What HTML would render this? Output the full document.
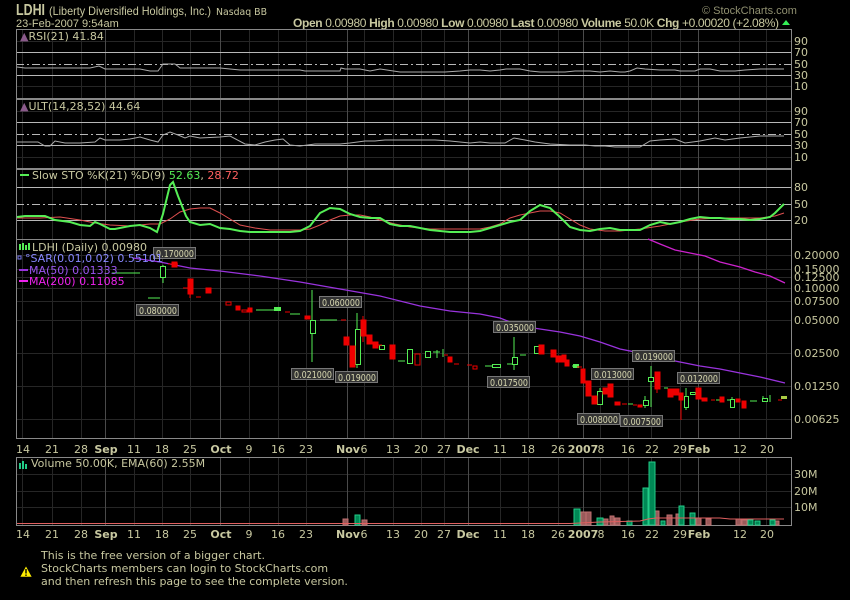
<!DOCTYPE html>
<html><head><meta charset="utf-8"><style>
html,body{margin:0;padding:0;background:#000;width:850px;height:600px;overflow:hidden}
svg{display:block;font-family:"DejaVu Sans","Liberation Sans",sans-serif}
</style></head><body>
<svg width="850" height="600" viewBox="0 0 850 600" xmlns="http://www.w3.org/2000/svg">
<rect width="850" height="600" fill="#000"/>
<!-- header -->
<text x="16" y="15" font-size="16" font-weight="bold" fill="#c8c8a0" font-family="Liberation Sans,sans-serif" textLength="29" lengthAdjust="spacingAndGlyphs">LDHI</text>
<text x="49" y="15" font-size="12" fill="#c8c8a0" font-family="Liberation Sans,sans-serif" textLength="162" lengthAdjust="spacingAndGlyphs">(Liberty Diversified Holdings, Inc.)</text>
<text x="216" y="15" font-size="10" fill="#c8c8a0" textLength="51" lengthAdjust="spacingAndGlyphs">Nasdaq BB</text>
<text x="16" y="27" font-size="11" fill="#c8c8a0" font-family="Liberation Sans,sans-serif">23-Feb-2007 9:54am</text>
<text x="293" y="27" font-size="12" fill="#c8c8a0" font-family="Liberation Sans,sans-serif" textLength="486"><tspan font-weight="bold">Open</tspan> 0.00980 <tspan font-weight="bold">High</tspan> 0.00980 <tspan font-weight="bold">Low</tspan> 0.00980 <tspan font-weight="bold">Last</tspan> 0.00980 <tspan font-weight="bold">Volume</tspan> 50.0K <tspan font-weight="bold">Chg</tspan> +0.00020 (+2.08%)</text>
<path d="M782 25 L786 20 L790 25 Z" fill="#33ee55"/>
<text x="702" y="14" font-size="11" fill="#909070" font-family="Liberation Sans,sans-serif">© StockCharts.com</text>

<!-- grid -->
<g stroke="#262626" stroke-width="1">
<path d="M22.5 29V438M52.5 29V438M81.5 29V438M134.5 29V438M162.5 29V438M190.5 29V438M249.5 29V438M278.5 29V438M306.5 29V438M364.5 29V438M393.5 29V438M421.5 29V438M444.5 29V438M500.5 29V438M528.5 29V438M558.5 29V438M600.5 29V438M628.5 29V438M651.5 29V438M680.5 29V438M739.5 29V438M766.5 29V438"/>
<path d="M22.5 457V525M52.5 457V525M81.5 457V525M134.5 457V525M162.5 457V525M190.5 457V525M249.5 457V525M278.5 457V525M306.5 457V525M364.5 457V525M393.5 457V525M421.5 457V525M444.5 457V525M500.5 457V525M528.5 457V525M558.5 457V525M600.5 457V525M628.5 457V525M651.5 457V525M680.5 457V525M739.5 457V525M766.5 457V525"/>
<path d="M16 41.5H792M16 86.5H792M16 111.5H792M16 157.5H792M16 255.5H792M16 269.5H792M16 277.5H792M16 288.5H792M16 301.5H792M16 320.5H792M16 353.5H792M16 386.5H792M16 419.5H792M16 474.5H792M16 491.5H792M16 507.5H792"/>
</g>
<g stroke="#4a4a4a" stroke-width="1">
<path d="M105.5 29V438M220.5 29V438M347.5 29V438M468.5 29V438M583.5 29V438M698.5 29V438"/>
<path d="M105.5 457V525M220.5 457V525M347.5 457V525M468.5 457V525M583.5 457V525M698.5 457V525"/>
</g>
<g stroke="#b8b8b8" stroke-width="1">
<path d="M16 52.5H792M16 75.5H792M16 122.5H792M16 145.5H792M16 187.5H792M16 220.5H792"/>
</g>
<g stroke="#b8b8b8" stroke-width="1" stroke-dasharray="8,3,2,3">
<path d="M16 64.5H792M16 134.5H792M16 204.5H792"/>
</g>
<g fill="none" stroke="#888" stroke-width="1">
<rect x="16.5" y="29.5" width="775" height="69"/>
<rect x="16.5" y="99.5" width="775" height="69"/>
<rect x="16.5" y="169.5" width="775" height="70"/>
<rect x="16.5" y="239.5" width="775" height="199"/>
<rect x="16.5" y="457.5" width="775" height="68"/>
</g>
<g font-size="11" fill="#c8c8a0">
<text x="794" y="45">90</text><text x="794" y="56">70</text><text x="794" y="68">50</text><text x="794" y="79">30</text><text x="794" y="90">10</text>
<text x="794" y="115">90</text><text x="794" y="126">70</text><text x="794" y="138">50</text><text x="794" y="149">30</text><text x="794" y="161">10</text>
<text x="794" y="191">80</text><text x="794" y="208">50</text><text x="794" y="224">20</text>
<text x="794" y="259">0.20000</text><text x="794" y="273">0.15000</text><text x="794" y="281">0.12500</text><text x="794" y="292">0.10000</text><text x="794" y="305">0.07500</text><text x="794" y="324">0.05000</text><text x="794" y="357">0.02500</text><text x="794" y="390">0.01250</text><text x="794" y="423">0.00625</text>
<text x="794" y="478">30M</text><text x="794" y="495">20M</text><text x="794" y="511">10M</text>
</g>
<g font-size="11" fill="#c8c8a0" text-anchor="middle">
<text x="23" y="453">14</text><text x="52" y="453">21</text><text x="81" y="453">28</text><text x="106" y="453" font-weight="bold">Sep</text><text x="134" y="453">11</text><text x="162" y="453">18</text><text x="190" y="453">25</text><text x="221" y="453" font-weight="bold">Oct</text><text x="249" y="453">9</text><text x="278" y="453">16</text><text x="306" y="453">23</text><text x="348" y="453" font-weight="bold">Nov</text><text x="364" y="453">6</text><text x="393" y="453">13</text><text x="421" y="453">20</text><text x="444" y="453">27</text><text x="468" y="453" font-weight="bold">Dec</text><text x="500" y="453">11</text><text x="528" y="453">18</text><text x="558" y="453">26</text><text x="583" y="453" font-weight="bold">2007</text><text x="601" y="453">8</text><text x="628" y="453">16</text><text x="652" y="453">22</text><text x="680" y="453">29</text><text x="699" y="453" font-weight="bold">Feb</text><text x="740" y="453">12</text><text x="767" y="453">20</text>
</g>
<g font-size="11" fill="#c8c8a0" text-anchor="middle">
<text x="23" y="538">14</text><text x="52" y="538">21</text><text x="81" y="538">28</text><text x="106" y="538" font-weight="bold">Sep</text><text x="134" y="538">11</text><text x="162" y="538">18</text><text x="190" y="538">25</text><text x="221" y="538" font-weight="bold">Oct</text><text x="249" y="538">9</text><text x="278" y="538">16</text><text x="306" y="538">23</text><text x="348" y="538" font-weight="bold">Nov</text><text x="364" y="538">6</text><text x="393" y="538">13</text><text x="421" y="538">20</text><text x="444" y="538">27</text><text x="468" y="538" font-weight="bold">Dec</text><text x="500" y="538">11</text><text x="528" y="538">18</text><text x="558" y="538">26</text><text x="583" y="538" font-weight="bold">2007</text><text x="601" y="538">8</text><text x="628" y="538">16</text><text x="652" y="538">22</text><text x="680" y="538">29</text><text x="699" y="538" font-weight="bold">Feb</text><text x="740" y="538">12</text><text x="767" y="538">20</text>
</g>

<polyline fill="none" stroke="#aaa" stroke-width="1" points="17,67 25,68 60,68 90,68 99,66 105,69 115,69 140,69 150,71 158,71 163,64 175,64 180,68 190,68 220,68 240,70 300,70 305,71 340,71 341,68 345,69 360,69 370,71 380,69 400,72 430,72 445,72 460,71 470,70 480,70 490,71 500,70 506,69 520,69 530,71 540,72 565,72 575,71 580,71 590,71 600,72 610,71 620,72 625,72 630,71 637,68 645,69 660,70 675,70 680,71 695,71 700,69 710,69 720,71 735,71 745,70 760,69 784,69"/>
<text x="20" y="40" font-size="11" fill="#c8c8a0"><tspan fill="#8a5a8a">▲</tspan>RSI(21) 41.84</text>
<polyline fill="none" stroke="#aaa" stroke-width="1" points="17,142 30,142 38,142 45,146 50,146 55,141 65,143 80,143 95,142 100,138 105,140 120,140 130,139 140,137 150,140 158,142 163,135 170,132 178,135 185,138 190,136 200,138 220,137 230,136 245,144 255,145 265,142 275,140 283,139 290,145 300,146 315,144 325,144 340,144 350,143 365,141 375,141 385,140 400,140 420,140 435,140 450,141 470,143 480,142 490,143 505,143 514,138 525,140 535,142 550,144 570,145 585,145 595,146 605,146 615,147 640,147 650,141 660,140 675,139 685,143 700,141 715,138 725,140 740,138 760,136 784,136"/>
<text x="20" y="110" font-size="11" fill="#c8c8a0"><tspan fill="#8a5a8a">▲</tspan>ULT(14,28,52) 44.64</text>
<polyline fill="none" stroke="#e05050" stroke-width="1" points="17,218 40,218 60,217 80,220 95,223 110,225 130,226 150,224 160,224 170,219 180,212 190,209 200,208 210,208 220,213 230,219 240,225 255,228 270,230 285,230 300,230 310,229 320,225 330,220 340,216 350,215 360,215 370,217 380,220 395,224 410,227 430,229 450,229 470,229 480,229 490,227 500,224 510,218 520,215 530,213 540,211 550,211 560,213 570,219 580,225 590,229 605,231 620,231 640,229 660,226 680,222 700,219 720,218 740,218 760,218 775,216 784,213"/>
<polyline fill="none" stroke="#55ee55" stroke-width="2" points="17,217 25,216 45,216 55,220 70,222 80,225 90,226 95,222 100,224 110,229 115,229 130,226 140,225 150,228 157,232 163,214 170,185 173,182 178,196 186,216 190,222 200,225 210,224 220,228 230,229 240,231 250,232 260,232 270,232 280,232 290,232 300,231 310,226 320,213 330,208 340,209 350,214 360,217 370,218 380,218 390,224 400,226 410,226 420,228 430,230 440,231 450,232 460,232 470,232 480,231 490,228 500,225 510,222 520,220 530,211 540,205 550,208 560,217 570,227 580,230 590,231 600,229 610,228 620,230 630,230 640,230 650,225 660,222 670,224 680,222 690,219 700,217 710,218 720,218 730,219 740,219 750,220 760,219 770,217 775,213 784,204"/>
<line x1="20" y1="175" x2="29" y2="175" stroke="#55ee55" stroke-width="2"/>
<text x="32" y="179" font-size="11" fill="#c8c8a0">Slow STO %K(21) %D(9) <tspan fill="#55ee55">52.63</tspan>, <tspan fill="#ff6060">28.72</tspan></text>

<polyline fill="none" stroke="#9933dd" stroke-width="1.3" points="133,258 160,262 190,268 220,271 260,276 300,282 340,289 380,296 420,306 450,311 480,314 500,318 520,326 560,332 580,336 600,342 620,349 640,353 660,358 680,362 700,366 720,369 740,373 760,377 785,383"/>
<polyline fill="none" stroke="#cc22cc" stroke-width="1.3" points="648,239 660,244 675,250 690,253 705,256 720,262 740,267 755,272 770,276 785,283"/>

<g stroke-width="1">
<g stroke="#55ee55" fill="none">
<path d="M112 273H140M148 298H160M256 310H276M290 314H300M320 320H337M398 361H405M433 352H440M485 366H500M507 364H513M520 355H526M572 366H578M628 404H633M750 401H757M664 388H668M716 400H720M727 400H731"/>
<path d="M163 265V283M312 290V362M357 313V368M514 337V370M651 366V407M686 388V410M600 388V405M645 396V408M763 396V401M770 395V402M732 397V408M437 350V358M443 349V357"/>
<rect x="160.5" y="266.5" width="5" height="11" fill="#000"/>
<rect x="310.5" y="320.5" width="5" height="13" fill="#000"/>
<rect x="355.5" y="329.5" width="5" height="35" fill="#000"/>
<rect x="379.5" y="345.5" width="5" height="4" fill="#000"/>
<rect x="407.5" y="349.5" width="5" height="14" fill="#000"/>
<rect x="425.5" y="351.5" width="5" height="6" fill="#000"/>
<rect x="492.5" y="364.5" width="8" height="3" fill="#000"/>
<rect x="512.5" y="357.5" width="5" height="7" fill="#000"/>
<rect x="534.5" y="346.5" width="5" height="7" fill="#000"/>
<rect x="597.5" y="391.5" width="5" height="13" fill="#000"/>
<rect x="643.5" y="400.5" width="5" height="5" fill="#000"/>
<rect x="648.5" y="377.5" width="5" height="4" fill="#000"/>
<rect x="684.5" y="396.5" width="4" height="11" fill="#000"/>
<rect x="690.5" y="392.5" width="5" height="2" fill="#000"/>
<rect x="730.5" y="399.5" width="4" height="8" fill="#000"/>
<rect x="762.5" y="398.5" width="5" height="3" fill="#000"/>
<rect x="274" y="307" width="7" height="4" fill="#55ee55" stroke="none"/>
<rect x="573" y="364" width="6" height="4" fill="#55ee55" stroke="none"/>
</g>
<g fill="#ee0000" stroke="#ee0000">
<path d="M168 264H178M183 288H188M196 297H201M285 312H290M341 320H346M377 345H382M444 355H448M454 364H459M467 365H472M577 367H582M622 404H627M633 405H637M711 400H715M778 400H782" fill="none"/>
<rect x="172" y="262" width="5" height="5"/>
<rect x="188" y="279" width="5" height="15"/><path d="M190 279V298" fill="none"/>
<rect x="206" y="288" width="5" height="5"/>
<rect x="236" y="306" width="4" height="4"/>
<rect x="248" y="308" width="4" height="4"/>
<rect x="305" y="316" width="5" height="3"/>
<rect x="344" y="337" width="5" height="8"/>
<rect x="350" y="346" width="5" height="21"/>
<rect x="361" y="320" width="5" height="16"/><path d="M363 316V342" fill="none"/>
<rect x="367" y="335" width="5" height="9"/>
<rect x="373" y="342" width="5" height="6"/>
<rect x="390" y="345" width="5" height="14"/>
<rect x="448" y="357" width="4" height="5"/>
<rect x="539" y="345" width="5" height="9"/>
<rect x="551" y="350" width="5" height="7"/>
<rect x="556" y="356" width="5" height="6"/>
<rect x="562" y="355" width="4" height="7"/>
<rect x="565" y="360" width="4" height="6"/>
<rect x="581" y="369" width="4" height="14"/>
<rect x="586" y="381" width="5" height="15"/>
<rect x="592" y="396" width="5" height="8"/>
<rect x="603" y="388" width="5" height="6"/>
<rect x="608" y="384" width="5" height="13"/>
<rect x="615" y="402" width="5" height="3"/>
<rect x="638" y="405" width="4" height="2"/>
<rect x="655" y="372" width="5" height="17"/><path d="M657 372V393" fill="none"/>
<rect x="668" y="389" width="5" height="8"/>
<rect x="674" y="389" width="5" height="6"/>
<rect x="679" y="393" width="4" height="7"/><path d="M681 393V420" fill="none"/>
<rect x="696" y="388" width="5" height="11"/>
<rect x="702" y="398" width="5" height="3"/>
<rect x="720" y="397" width="4" height="5"/>
<rect x="736" y="399" width="4" height="3"/>
<rect x="742" y="401" width="4" height="7"/>
<rect x="226" y="302" width="5" height="3" fill="none"/>
<rect x="242" y="310" width="5" height="2" fill="none"/>
<rect x="415" y="354" width="5" height="11" fill="none"/>
<rect x="473" y="366" width="4" height="3" fill="none"/>
</g>
<rect x="781" y="396" width="6" height="3" fill="#aacc44"/>
</g>

<g font-size="10" fill="#d8d8b0">
<g fill="#333" stroke="#777"><rect x="153.5" y="247.5" width="42" height="11"/><rect x="136.5" y="304.5" width="42" height="11"/><rect x="319.5" y="296.5" width="42" height="11"/><rect x="291.5" y="368.5" width="42" height="11"/><rect x="335.5" y="371.5" width="42" height="11"/><rect x="493.5" y="321.5" width="42" height="11"/><rect x="487.5" y="376.5" width="42" height="11"/><rect x="632.5" y="350.5" width="42" height="11"/><rect x="591.5" y="368.5" width="42" height="11"/><rect x="577.5" y="413.5" width="42" height="11"/><rect x="620.5" y="415.5" width="42" height="11"/><rect x="677.5" y="372.5" width="42" height="11"/></g>
<g lengthAdjust="spacingAndGlyphs">
<text x="156" y="257" textLength="38" lengthAdjust="spacingAndGlyphs">0.170000</text><text x="139" y="314" textLength="38" lengthAdjust="spacingAndGlyphs">0.080000</text><text x="322" y="306" textLength="38" lengthAdjust="spacingAndGlyphs">0.060000</text><text x="294" y="378" textLength="38" lengthAdjust="spacingAndGlyphs">0.021000</text><text x="338" y="381" textLength="38" lengthAdjust="spacingAndGlyphs">0.019000</text><text x="496" y="331" textLength="38" lengthAdjust="spacingAndGlyphs">0.035000</text><text x="490" y="386" textLength="38" lengthAdjust="spacingAndGlyphs">0.017500</text><text x="635" y="360" textLength="38" lengthAdjust="spacingAndGlyphs">0.019000</text><text x="594" y="378" textLength="38" lengthAdjust="spacingAndGlyphs">0.013000</text><text x="580" y="423" textLength="38" lengthAdjust="spacingAndGlyphs">0.008000</text><text x="623" y="425" textLength="38" lengthAdjust="spacingAndGlyphs">0.007500</text><text x="680" y="382" textLength="38" lengthAdjust="spacingAndGlyphs">0.012000</text>
</g>
</g>

<g font-size="11">
<path d="M20 250V244M23 250V243M26 250V245M29 250V243" stroke="#55ee55" stroke-width="2"/>
<text x="32" y="251" fill="#c8c8a0">LDHI (Daily) 0.00980</text>
<rect x="18" y="256" width="3" height="3" fill="none" stroke="#7777ee"/>
<text x="25" y="262" fill="#8888ff">°SAR(0.01,0.02) 0.55101</text>
<line x1="19" y1="270" x2="28" y2="270" stroke="#9933dd" stroke-width="2"/>
<text x="29" y="274" fill="#9955ee">MA(50) 0.01333</text>
<line x1="19" y1="281" x2="28" y2="281" stroke="#ee22ee" stroke-width="2"/>
<text x="29" y="285" fill="#ee22ee">MA(200) 0.11085</text>
</g>

<g stroke-width="1">
<g fill="#9a5a5a" stroke="#c07070">
<rect x="343" y="519" width="5" height="6"/><rect x="362" y="520" width="5" height="5"/><rect x="581" y="512" width="5" height="13"/><rect x="586" y="512" width="5" height="13"/><rect x="603" y="519" width="5" height="6"/><rect x="610" y="516" width="4" height="9"/><rect x="615" y="518" width="5" height="7"/><rect x="654" y="511" width="5" height="14"/><rect x="667" y="515" width="5" height="10"/><rect x="676" y="514" width="4" height="11"/><rect x="690" y="518" width="5" height="7"/><rect x="696" y="518" width="5" height="7"/><rect x="706" y="519" width="5" height="6"/><rect x="736" y="519" width="5" height="6"/><rect x="742" y="520" width="5" height="5"/><rect x="775" y="521" width="4" height="4"/></g>
<g fill="#008855" stroke="#22cc88">
<rect x="355" y="515" width="5" height="10"/><rect x="574" y="509" width="6" height="16"/><rect x="597" y="518" width="6" height="7"/><rect x="627" y="521" width="5" height="4"/><rect x="643" y="488" width="5" height="37"/><rect x="649" y="462" width="6" height="63"/><rect x="661" y="521" width="4" height="4"/><rect x="679" y="506" width="5" height="19"/><rect x="690" y="513" width="5" height="12"/><rect x="748" y="520" width="5" height="5"/><rect x="755" y="521" width="5" height="4"/><rect x="770" y="520" width="5" height="5"/></g>
</g>
<polyline fill="none" stroke="#e06060" stroke-width="1" points="17,523.5 570,523.5 600,522 640,521 648,519 656,518 720,518 730,519 784,519"/>
<path d="M20 469V463M23 469V461M26 469V464" stroke="#22cc88" stroke-width="2"/>
<text x="31" y="467" font-size="11" fill="#c8c8a0">Volume 50.00K, EMA(60) 2.55M</text>

<path d="M20 577 L26 566 L32 577 Z" fill="#ffee00" stroke="#000" stroke-width="0.5"/>
<rect x="25.3" y="569" width="1.4" height="4.5" fill="#000"/><rect x="25.3" y="574.5" width="1.4" height="1.4" fill="#000"/>
<g font-size="11" fill="#c8c8a0">
<text x="41" y="559">This is the free version of a bigger chart.</text>
<text x="41" y="572">StockCharts members can login to StockCharts.com</text>
<text x="41" y="585">and then refresh this page to see the complete version.</text>
</g>
</svg>
</body></html>
